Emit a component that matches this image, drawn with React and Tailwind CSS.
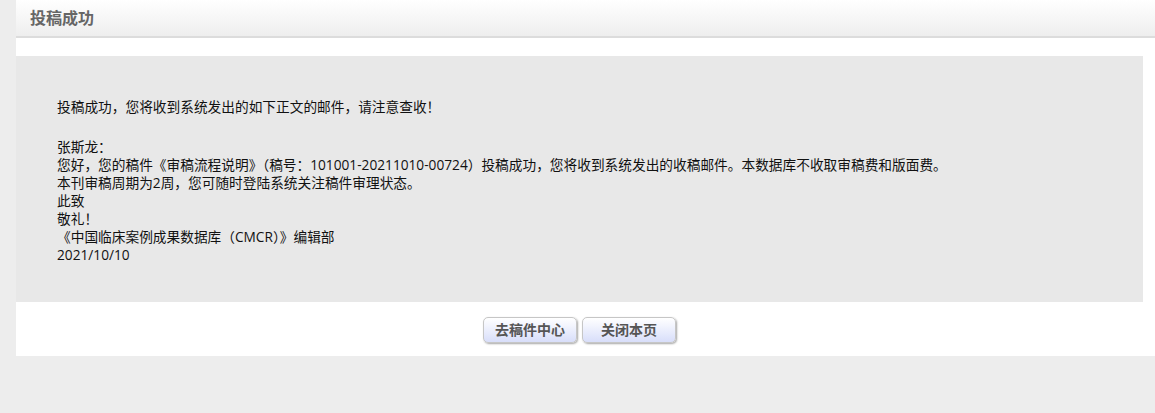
import React from 'react';

const font = { fontFamily: '"Open Sans", "Noto Sans CJK SC", sans-serif' };

const Btn = ({ children }) => (
    <button className="w-[94px] h-[26px] rounded-[5px] border border-[#c6c6c6] bg-gradient-to-b from-[#ffffff] to-[#d8defa] text-[14px] font-bold text-[#555] shadow-[1px_1px_2px_rgba(0,0,0,0.35)]">
        {children}
    </button>
);

const App = () => {
    return (
        <div className="min-h-[413px] bg-[#ededed] pl-4" style={font}>
            <div className="bg-white">
                {/* header */}
                <div className="h-[38px] flex items-center px-[14px] bg-gradient-to-b from-[#ffffff] to-[#eeeeee] border-b-2 border-[#dcdcdc]">
                    <span className="text-[16px] font-bold text-[#666]">投稿成功</span>
                </div>

                <div className="pt-[18px] mr-[12px]">
                    <div className="bg-[#e8e8e8] h-[246px] pl-[41px] pt-[42px] text-[13.7px] leading-[18px] text-[#111]">
                        <p className="mb-[22px]">投稿成功，您将收到系统发出的如下正文的邮件，请注意查收！</p>
                        <p>张斯龙：</p>
                        <p>您好，您的稿件《审稿流程说明》（稿号：101001-20211010-00724）投稿成功，您将收到系统发出的收稿邮件。本数据库不收取审稿费和版面费。</p>
                        <p>本刊审稿周期为2周，您可随时登陆系统关注稿件审理状态。</p>
                        <p>此致</p>
                        <p>敬礼！</p>
                        <p>《中国临床案例成果数据库（CMCR）》编辑部</p>
                        <p>2021/10/10</p>
                    </div>
                    <div className="h-[54px] flex items-center justify-center gap-[5px] pt-[1px]">
                        <Btn>去稿件中心</Btn>
                        <Btn>关闭本页</Btn>
                    </div>
                </div>
            </div>
        </div>
    );
};

export default App;
